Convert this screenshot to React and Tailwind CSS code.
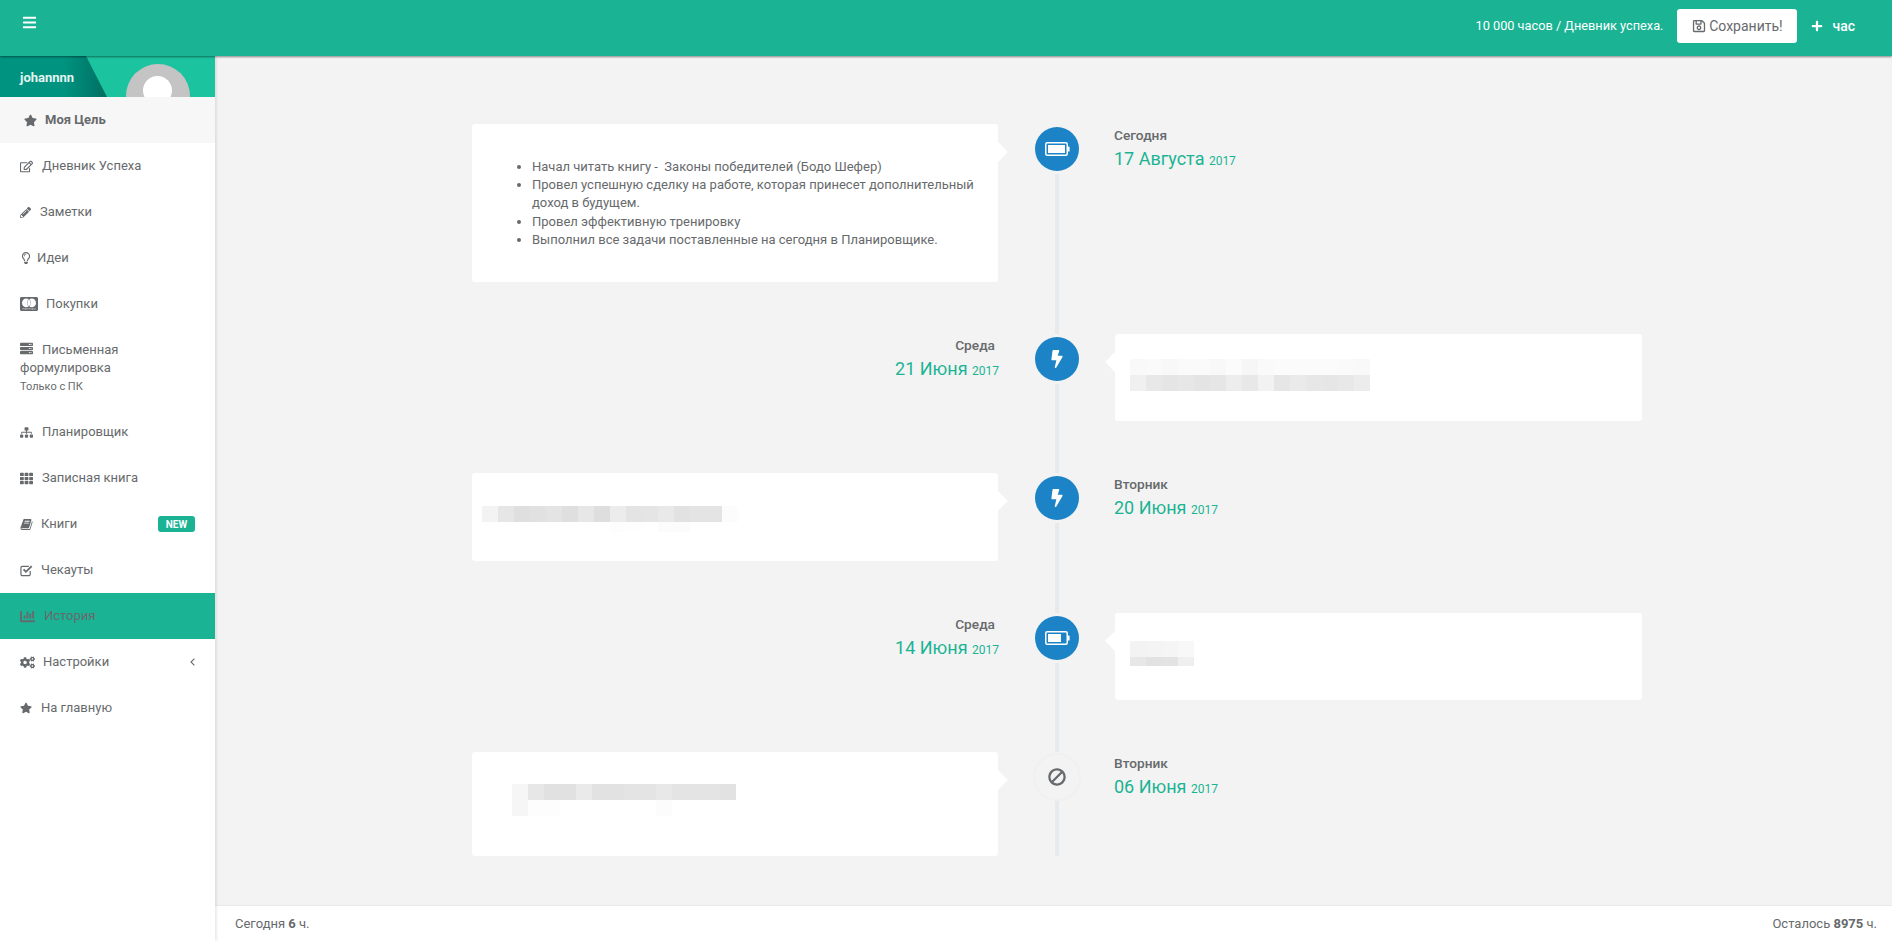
import React from "react";
import { FaBars, FaStar, FaRegEdit, FaPencilAlt, FaRegLightbulb, FaCcMastercard, FaServer, FaSitemap, FaTh, FaChartBar, FaCogs, FaRegSave, FaPlus, FaBolt, FaBan } from "react-icons/fa";

function BookIcon({ size }) {
  return (
    <svg width={size} height={size} viewBox="0 0 1664 1792" fill="currentColor">
      <path d="M1639 478q40 57 18 129l-275 906q-19 64-76.5 107.5T1183 1664H260q-77 0-148.5-53.5T12 1479q-24-67-2-127 0-4 3-27t4-37q1-7-2.5-18.5T12 1253q2-11 8-21t16.5-23.5T53 1186q23-38 45-91.5t30-91.5q3-10 .5-30t-.5-28q3-11 17-28t17-23q21-36 42-92t25-90q1-9-2.5-32t.5-28q4-13 22-30.5t22-22.5q19-26 42.5-84.5T342 398q1-8-3-25.5t-2-26.5q2-8 9-18t18-23 17-21q8-12 16.5-30.5t15-35 16-36 19.5-32 26.5-23.5 36-11.5T559 128l-1 3q38-9 51-9h761q74 0 114 56t18 130l-274 906q-36 119-71.5 153.5T1028 1402H159q-27 0-38 15-11 16-1 43 24 70 144 70h923q29 0 56-15.5t35-41.5l300-987q7-22 5-57 38 15 59 43zm-1064 2q-4 13 2 22.5t20 9.5h608q13 0 25.5-9.5T1247 480l21-64q4-13-2-22.5t-20-9.5H638q-13 0-25.5 9.5T596 416zm-83 256q-4 13 2 22.5t20 9.5h608q13 0 25.5-9.5T1164 736l21-64q4-13-2-22.5t-20-9.5H555q-13 0-25.5 9.5T513 672z" />
    </svg>
  );
}

function CheckIcon({ size }) {
  return (
    <svg width={size} height={size} viewBox="0 0 14 14" fill="none" stroke="currentColor">
      <path d="M11 7.5V11a1.5 1.5 0 0 1-1.5 1.5h-7A1.5 1.5 0 0 1 1 11V4a1.5 1.5 0 0 1 1.5-1.5h7" strokeWidth="1.3" />
      <path d="M3.8 5.8 6.4 8.4 12.6 2.2" strokeWidth="2" />
    </svg>
  );
}

function Caret() {
  return (
    <svg width="5" height="8" viewBox="0 0 5 8" fill="none" stroke="currentColor" strokeWidth="1.1">
      <path d="M4.4.6 1 4l3.4 3.4" />
    </svg>
  );
}

function Battery({ level }) {
  return (
    <svg width="25" height="14" viewBox="0 0 25 14" fill="none">
      <rect x="0.75" y="0.75" width="21.5" height="12.5" rx="1.5" stroke="white" strokeWidth="1.5" />
      <rect x="3" y="3" width={level} height="8" fill="white" />
      <rect x="23" y="4.5" width="1.6" height="5" rx="0.6" fill="white" />
    </svg>
  );
}

const NAV = [
  { icon: FaRegEdit, size: 13, w: 22, label: "Дневник Успеха" },
  { icon: FaPencilAlt, size: 11, w: 20, label: "Заметки" },
  { icon: FaRegLightbulb, size: 12, w: 17, label: "Идеи" },
  { icon: FaCcMastercard, size: 18, w: 26, label: "Покупки" },
];
const NAV2 = [
  { icon: FaSitemap, size: 13, w: 22, label: "Планировщик" },
  { icon: FaTh, size: 13, w: 22, label: "Записная книга" },
  { icon: BookIcon, size: 13, w: 21, label: "Книги", badge: true },
  { icon: CheckIcon, size: 13, w: 21, label: "Чекауты" },
  { icon: FaChartBar, size: 15, w: 24, label: "История", active: true },
  { icon: FaCogs, size: 15, w: 23, label: "Настройки", caret: true },
  { icon: FaStar, size: 12, w: 21, label: "На главную" },
];

function NavItem({ item }) {
  const Icon = item.icon;
  return (
    <div className={`flex h-[46px] items-center pl-5 pr-5 ${item.active ? "bg-[#1ab394]" : ""}`}>
      <span className="flex shrink-0 items-center" style={{ width: item.w }}>
        <Icon size={item.size} />
      </span>
      <span className="flex-1">{item.label}</span>
      {item.badge && (
        <span className="flex h-4 w-[37px] items-center justify-center rounded-[3px] bg-[#1ab394] text-[10px] font-bold text-white">NEW</span>
      )}
      {item.caret && <Caret />}
    </div>
  );
}

const g = (v) => `rgb(${v},${v},${v})`;

function Blur({ rows, className }) {
  return (
    <div className={`flex flex-col ${className || ""}`}>
      {rows.map((r, i) => (
        <div key={i} className="flex" style={{ height: r.h }}>
          {r.c.map((v, j) => (
            <div key={j} className="w-4" style={{ background: g(v) }} />
          ))}
        </div>
      ))}
    </div>
  );
}

function DateBlock({ day, date, right }) {
  return (
    <div className={right ? "pt-[2px] text-right" : "ml-[-1px] pt-[2px]"}>
      <div className={`text-[13.7px] font-medium leading-[18px] ${right ? "pr-1" : ""}`}>{day}</div>
      <div className="mt-[4px] text-[18px] leading-[22px] text-[#1ab394]">
        {date} <span className="text-[12px]">2017</span>
      </div>
    </div>
  );
}

function Card({ children, side, className }) {
  return (
    <div className={`relative rounded-[3px] bg-white ${className}`}>
      {side === "right" ? (
        <span className="absolute right-[-7px] top-[21px] h-[14px] w-[14px] rotate-45 bg-white" />
      ) : (
        <span className="absolute left-[-7px] top-[21px] h-[14px] w-[14px] rotate-45 bg-white" />
      )}
      <div className="relative">{children}</div>
    </div>
  );
}

function Row({ left, right, icon, light, last, h }) {
  const cell = last ? "" : "pb-[52px]";
  const minHeight = h + (last ? 0 : 52);
  return (
    <div className="grid grid-cols-[527px_116px_527px]">
      <div className={cell} style={{ minHeight }}>{left}</div>
      <div className="flex flex-col items-center pt-[3px]">
        <div className={`flex h-11 w-11 shrink-0 items-center justify-center rounded-full ${light ? "bg-[#f3f3f3] text-[#676a6c] shadow-[0_0_0_2px_#f0f0f0]" : "bg-[#1c84c6] text-white"}`}>
          {icon}
        </div>
        <div className={`w-1 flex-1 bg-[#e7eaec] ${light ? "mt-[2px]" : "mt-[3px]"}`} />
      </div>
      <div className={cell} style={{ minHeight }}>{right}</div>
    </div>
  );
}

export default function App() {
  return (
    <div className="flex h-screen w-full flex-col overflow-hidden bg-[#f3f3f3] text-[13px] text-[#676a6c]" style={{ fontFamily: "Roboto, 'Noto Sans', sans-serif" }}>
      <header className="relative z-10 flex h-14 shrink-0 items-start justify-between bg-[#1ab394] shadow-[0_1px_2px_rgba(0,0,0,0.45)]">
        <div className="pl-[22px] pt-[15px] text-white"><FaBars size={15} /></div>
        <div className="flex items-center pr-[37px] pt-[9px] text-white">
          <span className="mr-[14px] text-[12.75px]">10 000 часов / Дневник успеха.</span>
          <button className="flex h-[34px] w-[120px] items-center justify-center gap-[3px] rounded-[3px] bg-white text-[14px] text-[#676a6c]">
            <FaRegSave size={14} />Сохранить!
          </button>
          <span className="ml-[14px] mr-[9px]"><FaPlus size={12} /></span>
          <span className="text-[14px] font-medium">час</span>
        </div>
      </header>
      <div className="flex min-h-0 flex-1">
        <aside className="relative z-[5] w-[215px] shrink-0 bg-white shadow-[2px_0_2px_rgba(0,0,0,0.08)]">
          <div className="relative h-[41px] overflow-hidden bg-[#1bc39f]">
            <div className="absolute inset-0 bg-[linear-gradient(90deg,#009380_60%,#006e60_100%)] [clip-path:polygon(0_0,86px_0,107px_100%,0_100%)]" style={{ width: 107 }} />
            <div className="absolute left-[126px] top-2 h-16 w-16 rounded-full bg-[#c4c4c4]" />
            <div className="absolute left-[143px] top-5 h-[29px] w-[29px] rounded-full bg-white" />
            <span className="relative block pl-5 pt-[12px] text-[13px] font-bold text-[#e4f5f2]">johannnn</span>
          </div>
          <div className="flex h-[46px] items-center bg-[#f7f7f7] pl-6 font-bold">
            <span className="flex w-[21px] items-center"><FaStar size={13} /></span>Моя Цель
          </div>
          {NAV.map((it) => <NavItem key={it.label} item={it} />)}
          <div className="h-[82px] pl-5 pt-[14px] leading-[18px]">
            <FaServer size={13} className="mr-[9px] inline align-[-1px]" />Письменная<br />формулировка
            <div className="mt-[1px] text-[11px]">Только с ПК</div>
          </div>
          {NAV2.map((it) => <NavItem key={it.label} item={it} />)}
        </aside>
        <main className="flex min-w-0 flex-1 flex-col">
          <div className="flex-1 pl-[257px] pt-[68px]">
            <div className="w-[1170px]">
              <Row h={158} icon={<Battery level={17} />}
                left={
                  <Card side="right" className="mr-[1px] h-[158px] pl-[60px] pr-6 pt-[34px]">
                    <ul className="list-disc pl-0 leading-[18.2px] marker:text-[#676a6c]">
                      <li>Начал читать книгу -&nbsp; Законы победителей (Бодо Шефер)</li>
                      <li>Провел успешную сделку на работе, которая принесет дополнительный доход в будущем.</li>
                      <li>Провел эффективную тренировку</li>
                      <li>Выполнил все задачи поставленные на сегодня в Планировщике.</li>
                    </ul>
                  </Card>
                }
                right={<DateBlock day="Сегодня" date="17 Августа" />}
              />
              <Row h={87} icon={<FaBolt size={18} />}
                left={<DateBlock right day="Среда" date="21 Июня" />}
                right={
                  <Card side="left" className="h-[87px] pl-[15px] pt-[25px]">
                    <Blur rows={[
                      { h: 16, c: [249, 250, 248, 250, 250, 248, 251, 246, 250, 251, 251, 251, 251, 250, 249] },
                      { h: 16, c: [240, 232, 229, 231, 228, 230, 237, 232, 242, 230, 234, 231, 230, 232, 236] },
                    ]} />
                  </Card>
                }
              />
              <Row h={88} icon={<FaBolt size={18} />}
                left={
                  <Card side="right" className="mr-[1px] h-[88px] pl-[10px] pt-[33px]">
                    <Blur rows={[
                      { h: 16, c: [243, 230, 223, 225, 228, 223, 231, 222, 236, 228, 229, 233, 226, 228, 228, 252] },
                      { h: 10, c: [255, 255, 255, 255, 255, 255, 255, 255, 253, 254, 255, 252, 252, 255, 255, 255] },
                    ]} />
                  </Card>
                }
                right={<DateBlock day="Вторник" date="20 Июня" />}
              />
              <Row h={87} icon={<Battery level={13} />}
                left={<DateBlock right day="Среда" date="14 Июня" />}
                right={
                  <Card side="left" className="h-[87px] pl-[15px] pt-[28px]">
                    <Blur rows={[
                      { h: 16, c: [243, 244, 245, 248] },
                      { h: 9, c: [231, 226, 227, 239] },
                    ]} />
                  </Card>
                }
              />
              <Row last light h={104} icon={<FaBan size={18} className="-scale-x-100" />}
                left={
                  <Card side="right" className="mr-[1px] h-[104px] pl-10 pt-8">
                    <Blur rows={[
                      { h: 16, c: [246, 231, 225, 225, 234, 226, 226, 228, 228, 232, 228, 228, 228, 226] },
                      { h: 16, c: [246, 253, 253, 255, 255, 255, 255, 255, 255, 252, 255, 255, 255, 255] },
                    ]} />
                  </Card>
                }
                right={<DateBlock day="Вторник" date="06 Июня" />}
              />
            </div>
          </div>
          <footer className="flex h-9 shrink-0 items-center justify-between border-t border-[#e7eaec] bg-white pl-5 pr-[15px] text-[13px]">
            <span>Сегодня <b>6</b> ч.</span>
            <span>Осталось <b>8975</b> ч.</span>
          </footer>
        </main>
      </div>
    </div>
  );
}
